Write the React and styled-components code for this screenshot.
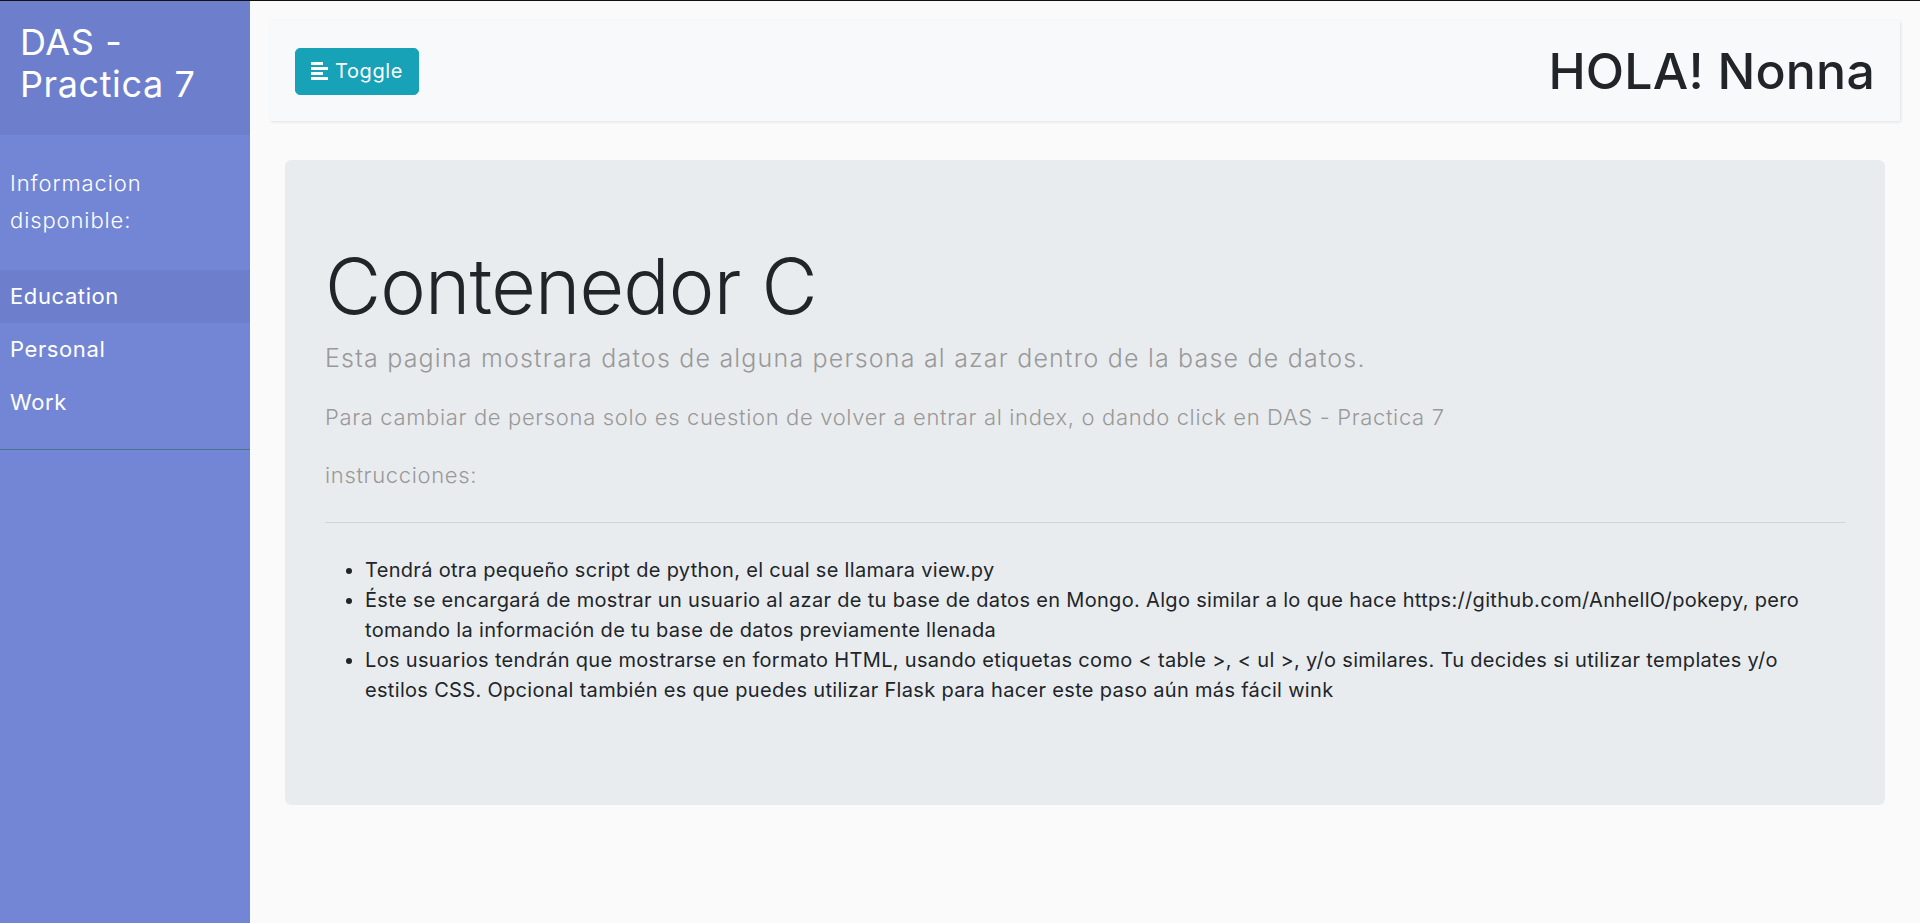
import React from 'react';
import styled, { createGlobalStyle } from 'styled-components';

const GlobalStyle = createGlobalStyle`
	* {
		box-sizing: border-box;
	}
	body {
		margin: 0;
		background: #fafafa;
		font-family: Inter, "Open Sans", sans-serif;
		color: #212529;
	}
`;

const menu = ['Education', 'Personal', 'Work'];

const App = () => {
	return (
		<Wrapper>
			<GlobalStyle />
			<Sidebar>
				<SidebarHeader>
					<Brand>DAS - Practica 7</Brand>
				</SidebarHeader>
				<Components>
					<SideText>Informacion disponible:</SideText>
					{menu.map((item, i) => (
						<NavItem key={item} active={i === 0}>
							<NavLink href="#">{item}</NavLink>
						</NavItem>
					))}
				</Components>
			</Sidebar>
			<Content>
				<Navbar>
					<ToggleButton type="button">
						<AlignIcon />
						<span>Toggle</span>
					</ToggleButton>
					<Greeting>HOLA! Nonna</Greeting>
				</Navbar>
				<Jumbotron>
					<Display>Contenedor C</Display>
					<Lead>Esta pagina mostrara datos de alguna persona al azar dentro de la base de datos.</Lead>
					<Text>Para cambiar de persona solo es cuestion de volver a entrar al index, o dando click en DAS - Practica 7</Text>
					<Text>instrucciones:</Text>
					<Rule />
					<List>
						<li>Tendrá otra pequeño script de python, el cual se llamara view.py</li>
						<li>Éste se encargará de mostrar un usuario al azar de tu base de datos en Mongo. Algo similar a lo que hace https://github.com/AnhellO/pokepy, pero<br />tomando la información de tu base de datos previamente llenada</li>
						<li>Los usuarios tendrán que mostrarse en formato HTML, usando etiquetas como &lt; table &gt;, &lt; ul &gt;, y/o similares. Tu decides si utilizar templates y/o<br />estilos CSS. Opcional también es que puedes utilizar Flask para hacer este paso aún más fácil wink</li>
					</List>
				</Jumbotron>
			</Content>
		</Wrapper>
	);
};

const AlignIcon = () => (
	<svg width="17" height="18" viewBox="0 0 17 18" fill="#fff">
		<rect x="0" y="0" width="12" height="3" />
		<rect x="0" y="5" width="17" height="3" />
		<rect x="0" y="10" width="12" height="3" />
		<rect x="0" y="15" width="17" height="3" />
	</svg>
);

const Wrapper = styled.div`
	display: flex;
	align-items: stretch;
	min-height: 100vh;
	border-top: 1px solid #111;
`;

const Sidebar = styled.nav`
	width: 250px;
	flex-shrink: 0;
	background: #7386d5;
	color: #fff;
`;

const SidebarHeader = styled.div`
	padding: 20px;
	background: #6d7fcc;
`;

const Brand = styled.h3`
	margin: 0 0 10px;
	font-size: 36px;
	line-height: 42px;
	font-weight: 400;
	letter-spacing: 0.6px;
`;

const Components = styled.ul`
	list-style: none;
	margin: 0;
	padding: 20px 0;
	border-bottom: 1px solid #47748b;
`;

const SideText = styled.p`
	margin: 0 0 20px;
	padding: 10px;
	font-size: 22px;
	line-height: 37.4px;
	font-weight: 300;
	letter-spacing: 0.9px;
	color: #fff;
`;

const NavItem = styled.li`
	background: ${({ active }) => (active ? '#6d7fcc' : 'transparent')};
`;

const NavLink = styled.a`
	display: block;
	padding: 10px;
	font-size: 22px;
	line-height: 33px;
	letter-spacing: 0.6px;
	color: #fff;
	text-decoration: none;
`;

const Content = styled.main`
	flex: 1;
	padding: 20px;
`;

const Navbar = styled.div`
	height: 100px;
	display: flex;
	align-items: center;
	justify-content: space-between;
	padding: 0 25px;
	margin-bottom: 39px;
	background: #f8f9fa;
	box-shadow: 1px 1px 3px rgba(0, 0, 0, 0.1);
`;

const ToggleButton = styled.button`
	display: flex;
	align-items: center;
	gap: 7px;
	padding: 7.5px 15px;
	border: 1px solid #17a2b8;
	border-radius: 5px;
	background: #17a2b8;
	color: #fff;
	font-family: inherit;
	font-size: 20px;
	line-height: 30px;
	font-weight: 400;
	letter-spacing: 0.6px;
`;

const Greeting = styled.h1`
	margin: 0;
	font-size: 50px;
	line-height: 60px;
	font-weight: 500;
	letter-spacing: 0.2px;
	color: #212529;
`;

const Jumbotron = styled.section`
	margin: 0 15px;
	padding: 80px 40px;
	background: #e9ecef;
	border-radius: 6px;
`;

const Display = styled.h1`
	margin: 0 0 3px;
	font-size: 77px;
	line-height: 93.6px;
	font-weight: 300;
	letter-spacing: -0.8px;
	color: #212529;
`;

const Text = styled.p`
	margin: 0 0 20px;
	font-size: 22px;
	line-height: 1.7em;
	font-weight: 300;
	letter-spacing: 0.65px;
	color: #999;
`;

const Lead = styled(Text)`
	font-size: 25px;
	letter-spacing: 1.2px;
`;

const Rule = styled.hr`
	margin: 28px 0 32px;
	border: 0;
	border-top: 1px solid rgba(0, 0, 0, 0.1);
`;

const List = styled.ul`
	margin: 0 0 20px;
	padding-left: 40px;
	font-size: 20px;
	line-height: 30px;
	letter-spacing: 0.32px;
	white-space: nowrap;
	color: #212529;
`;

export default App;
